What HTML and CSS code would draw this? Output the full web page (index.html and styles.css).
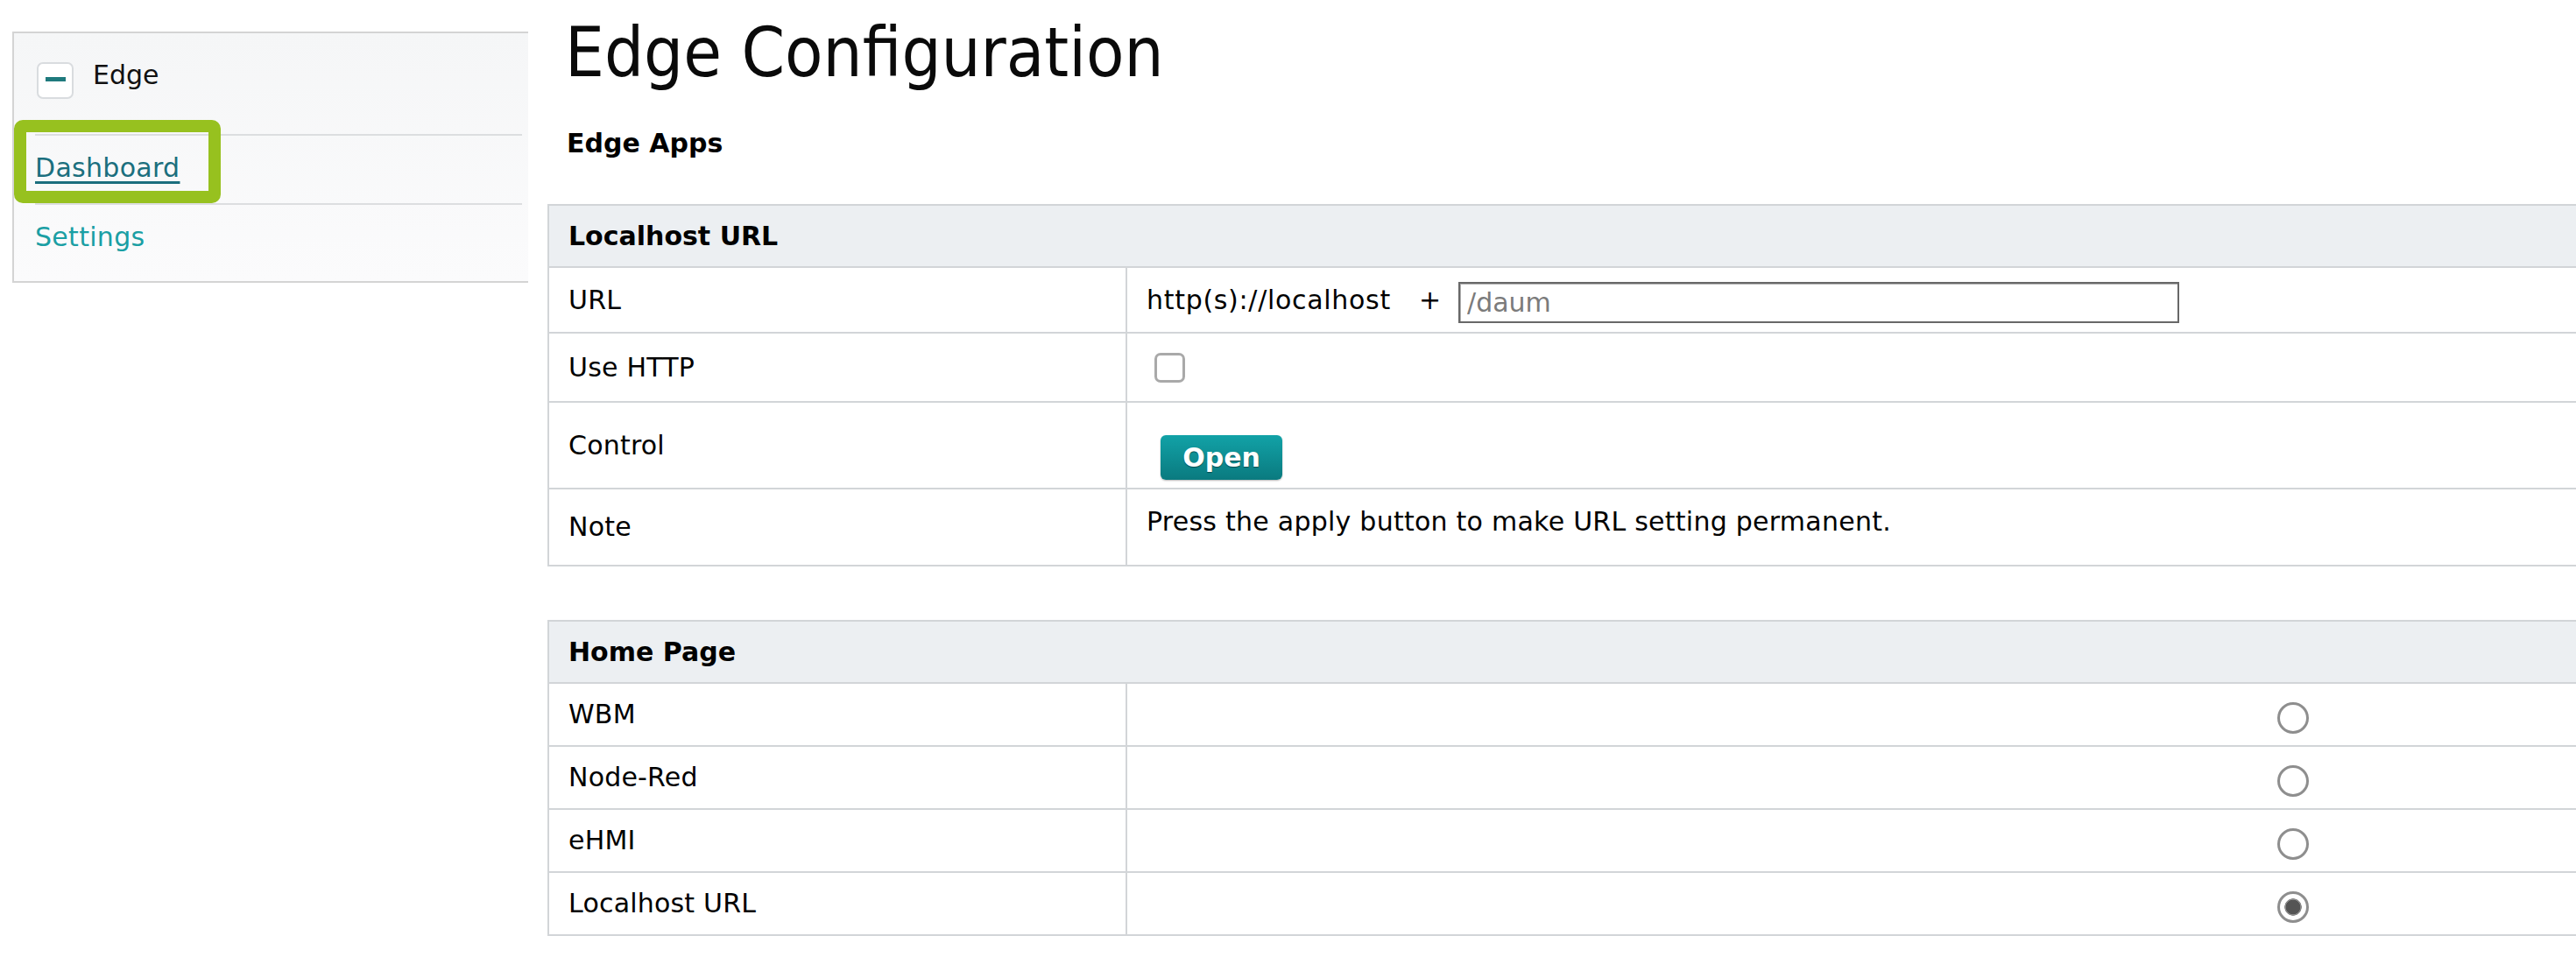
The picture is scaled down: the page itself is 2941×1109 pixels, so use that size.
FILE: index.html
```html
<!DOCTYPE html>
<html lang="en">
<head>
<meta charset="utf-8">
<title>Edge Configuration</title>
<link rel="stylesheet" href="styles.css">
</head>
<body>
<aside class="sidebar">
  <div class="sb-head">
    <span class="toggle"><span class="dash"></span></span>
    <span class="sb-title">Edge</span>
  </div>
  <nav class="sb-nav">
    <a class="sb-link active" href="#">Dashboard</a>
    <a class="sb-link" href="#">Settings</a>
  </nav>
  <div class="highlight"></div>
</aside>
<main class="content">
  <h1 class="page-title">Edge Configuration</h1>
  <h2 class="section-title">Edge Apps</h2>

  <section class="panel">
    <div class="panel-head">Localhost URL</div>
    <div class="row h-url">
      <div class="cell-label">URL</div>
      <div class="cell-value"><span class="url-prefix">http(s)://localhost</span><span class="plus">+</span><input class="url-input" type="text" placeholder="/daum"></div>
    </div>
    <div class="row h-http">
      <div class="cell-label">Use HTTP</div>
      <div class="cell-value"><input class="check" type="checkbox"></div>
    </div>
    <div class="row h-control">
      <div class="cell-label">Control</div>
      <div class="cell-value"><button class="btn-open" type="button">Open</button></div>
    </div>
    <div class="row h-note">
      <div class="cell-label">Note</div>
      <div class="cell-value"><span class="note-text">Press the apply button to make URL setting permanent.</span></div>
    </div>
  </section>

  <section class="panel panel-home">
    <div class="panel-head">Home Page</div>
    <div class="row h-radio">
      <div class="cell-label">WBM</div>
      <div class="cell-value center"><input class="radio" type="radio" name="home"></div>
    </div>
    <div class="row h-radio">
      <div class="cell-label">Node-Red</div>
      <div class="cell-value center"><input class="radio" type="radio" name="home"></div>
    </div>
    <div class="row h-radio">
      <div class="cell-label">eHMI</div>
      <div class="cell-value center"><input class="radio" type="radio" name="home"></div>
    </div>
    <div class="row h-radio">
      <div class="cell-label">Localhost URL</div>
      <div class="cell-value center"><input class="radio" type="radio" name="home" checked></div>
    </div>
  </section>
</main>
</body>
</html>
```

FILE: styles.css
```css
html, body {
  margin: 0;
  padding: 0;
}

body {
  display: flex;
  align-items: flex-start;
  width: 2941px;
  height: 1109px;
  overflow: hidden;
  background: #ffffff;
  color: #000000;
  font-family: "DejaVu Sans", "Liberation Sans", sans-serif;
  font-size: 30px;
  line-height: 36px;
}

/* ---------- Sidebar ---------- */
.sidebar {
  position: relative;
  flex: none;
  width: 589px;
  box-sizing: border-box;
  margin: 36px 0 0 14px;
  border: 2px solid #d4d4d4;
  border-right: none;
  background: linear-gradient(#f5f6f7, #fbfbfc);
}

.sb-head {
  display: flex;
  align-items: flex-start;
  height: 115px;
  box-sizing: border-box;
  padding: 33px 0 0 26px;
}

.toggle {
  display: flex;
  align-items: center;
  justify-content: center;
  width: 42px;
  height: 42px;
  box-sizing: border-box;
  border: 2px solid #d9dcdf;
  border-radius: 7px;
  background: #ffffff;
}

.dash {
  width: 23px;
  height: 5px;
  margin-top: -3px;
  background: #1f7a7d;
}

.sb-title {
  margin: -3px 0 0 22px;
  color: #111111;
}

.sb-nav {
  margin: 0 7px 0 24px;
}

.sb-link {
  display: block;
  border-top: 2px solid #dcdee0;
  padding: 19px 0 22px;
  color: #1a9fa4;
  text-decoration: none;
  letter-spacing: 0.3px;
}

.sb-link:last-child {
  padding-bottom: 32px;
}

.sb-link.active {
  color: #1b6f7e;
  text-decoration: underline;
  text-decoration-thickness: 3px;
  text-underline-offset: 5px;
}

.highlight {
  position: absolute;
  left: 0;
  top: 99px;
  width: 236px;
  height: 95px;
  box-sizing: border-box;
  border: 14px solid #97c11f;
  border-radius: 10px;
  pointer-events: none;
}

/* ---------- Main ---------- */
.content {
  flex: 1;
  min-width: 0;
  margin-left: 22px;
  overflow: hidden;
}

.page-title {
  margin: 15px 0 0 0;
  padding-left: 20px;
  font-family: "DejaVu Sans Condensed", "DejaVu Sans", sans-serif;
  font-stretch: semi-condensed;
  font-size: 79px;
  line-height: 90px;
  font-weight: normal;
  color: #0a0a0a;
}

.section-title {
  margin: 41px 0 0 22px;
  font-size: 30px;
  line-height: 36px;
  font-weight: bold;
}

.panel {
  width: 3322px;
  margin-top: 51px;
  border-top: 2px solid #d2d5d8;
  border-left: 2px solid #d2d5d8;
}

.panel-home {
  margin-top: 61px;
}

.panel-head {
  display: flex;
  align-items: center;
  height: 71px;
  box-sizing: border-box;
  padding-left: 22px;
  border-bottom: 2px solid #d2d5d8;
  background: #eceff2;
  font-weight: bold;
}

.row {
  display: flex;
  box-sizing: border-box;
  border-bottom: 2px solid #d2d5d8;
}

.h-url { height: 75px; }
.h-http { height: 79px; }
.h-control { height: 99px; }
.h-note { height: 88px; }
.h-radio { height: 72px; }

.cell-label {
  display: flex;
  align-items: center;
  flex: none;
  width: 660px;
  box-sizing: border-box;
  padding-left: 22px;
  border-right: 2px solid #d2d5d8;
  letter-spacing: 0.2px;
}

.cell-value {
  display: flex;
  align-items: center;
  flex: 1;
  padding-left: 22px;
  white-space: nowrap;
}

.cell-value.center {
  justify-content: center;
  padding-left: 0;
}

.url-prefix {
  letter-spacing: 0.7px;
}

.plus {
  margin: 0 20px 0 32px;
}

.url-input {
  width: 823px;
  height: 47px;
  box-sizing: border-box;
  margin: 6px 0 0 0;
  padding: 0 0 0 8px;
  border: 2px solid #686868;
  box-shadow: inset 1px 1px 0 #b0b0b0;
  border-radius: 0;
  background: #ffffff;
  font-family: "DejaVu Sans", sans-serif;
  font-size: 30px;
  color: #333333;
  outline: none;
}

.url-input::placeholder {
  color: #7b7b7b;
  opacity: 1;
}

.check {
  appearance: none;
  -webkit-appearance: none;
  width: 35px;
  height: 34px;
  margin: 0 0 0 9px;
  box-sizing: border-box;
  border: 3px solid #a9a9a9;
  border-radius: 7px;
  background: #ffffff;
}

.btn-open {
  width: 139px;
  height: 51px;
  margin: 28px 0 0 16px;
  padding: 0;
  border: none;
  border-radius: 6px;
  background: linear-gradient(#12a2a7, #0a7a7f);
  box-shadow: 0 1px 2px rgba(0, 0, 0, 0.3);
  color: #ffffff;
  font-family: "DejaVu Sans", sans-serif;
  font-size: 30px;
  font-weight: bold;
  line-height: 51px;
  text-shadow: 0 1px 1px rgba(0, 0, 0, 0.45);
}

.note-text {
  margin-bottom: 12px;
  letter-spacing: 0.25px;
}

.radio {
  appearance: none;
  -webkit-appearance: none;
  width: 36px;
  height: 36px;
  margin: 8px 0 0 0;
  box-sizing: border-box;
  border: 3px solid #8e8e8e;
  border-radius: 50%;
  background: #ffffff;
}

.radio:checked {
  background: radial-gradient(circle, #555555 0 8px, #8a8a8a 8.5px 9.5px, #ffffff 10px);
}
```
